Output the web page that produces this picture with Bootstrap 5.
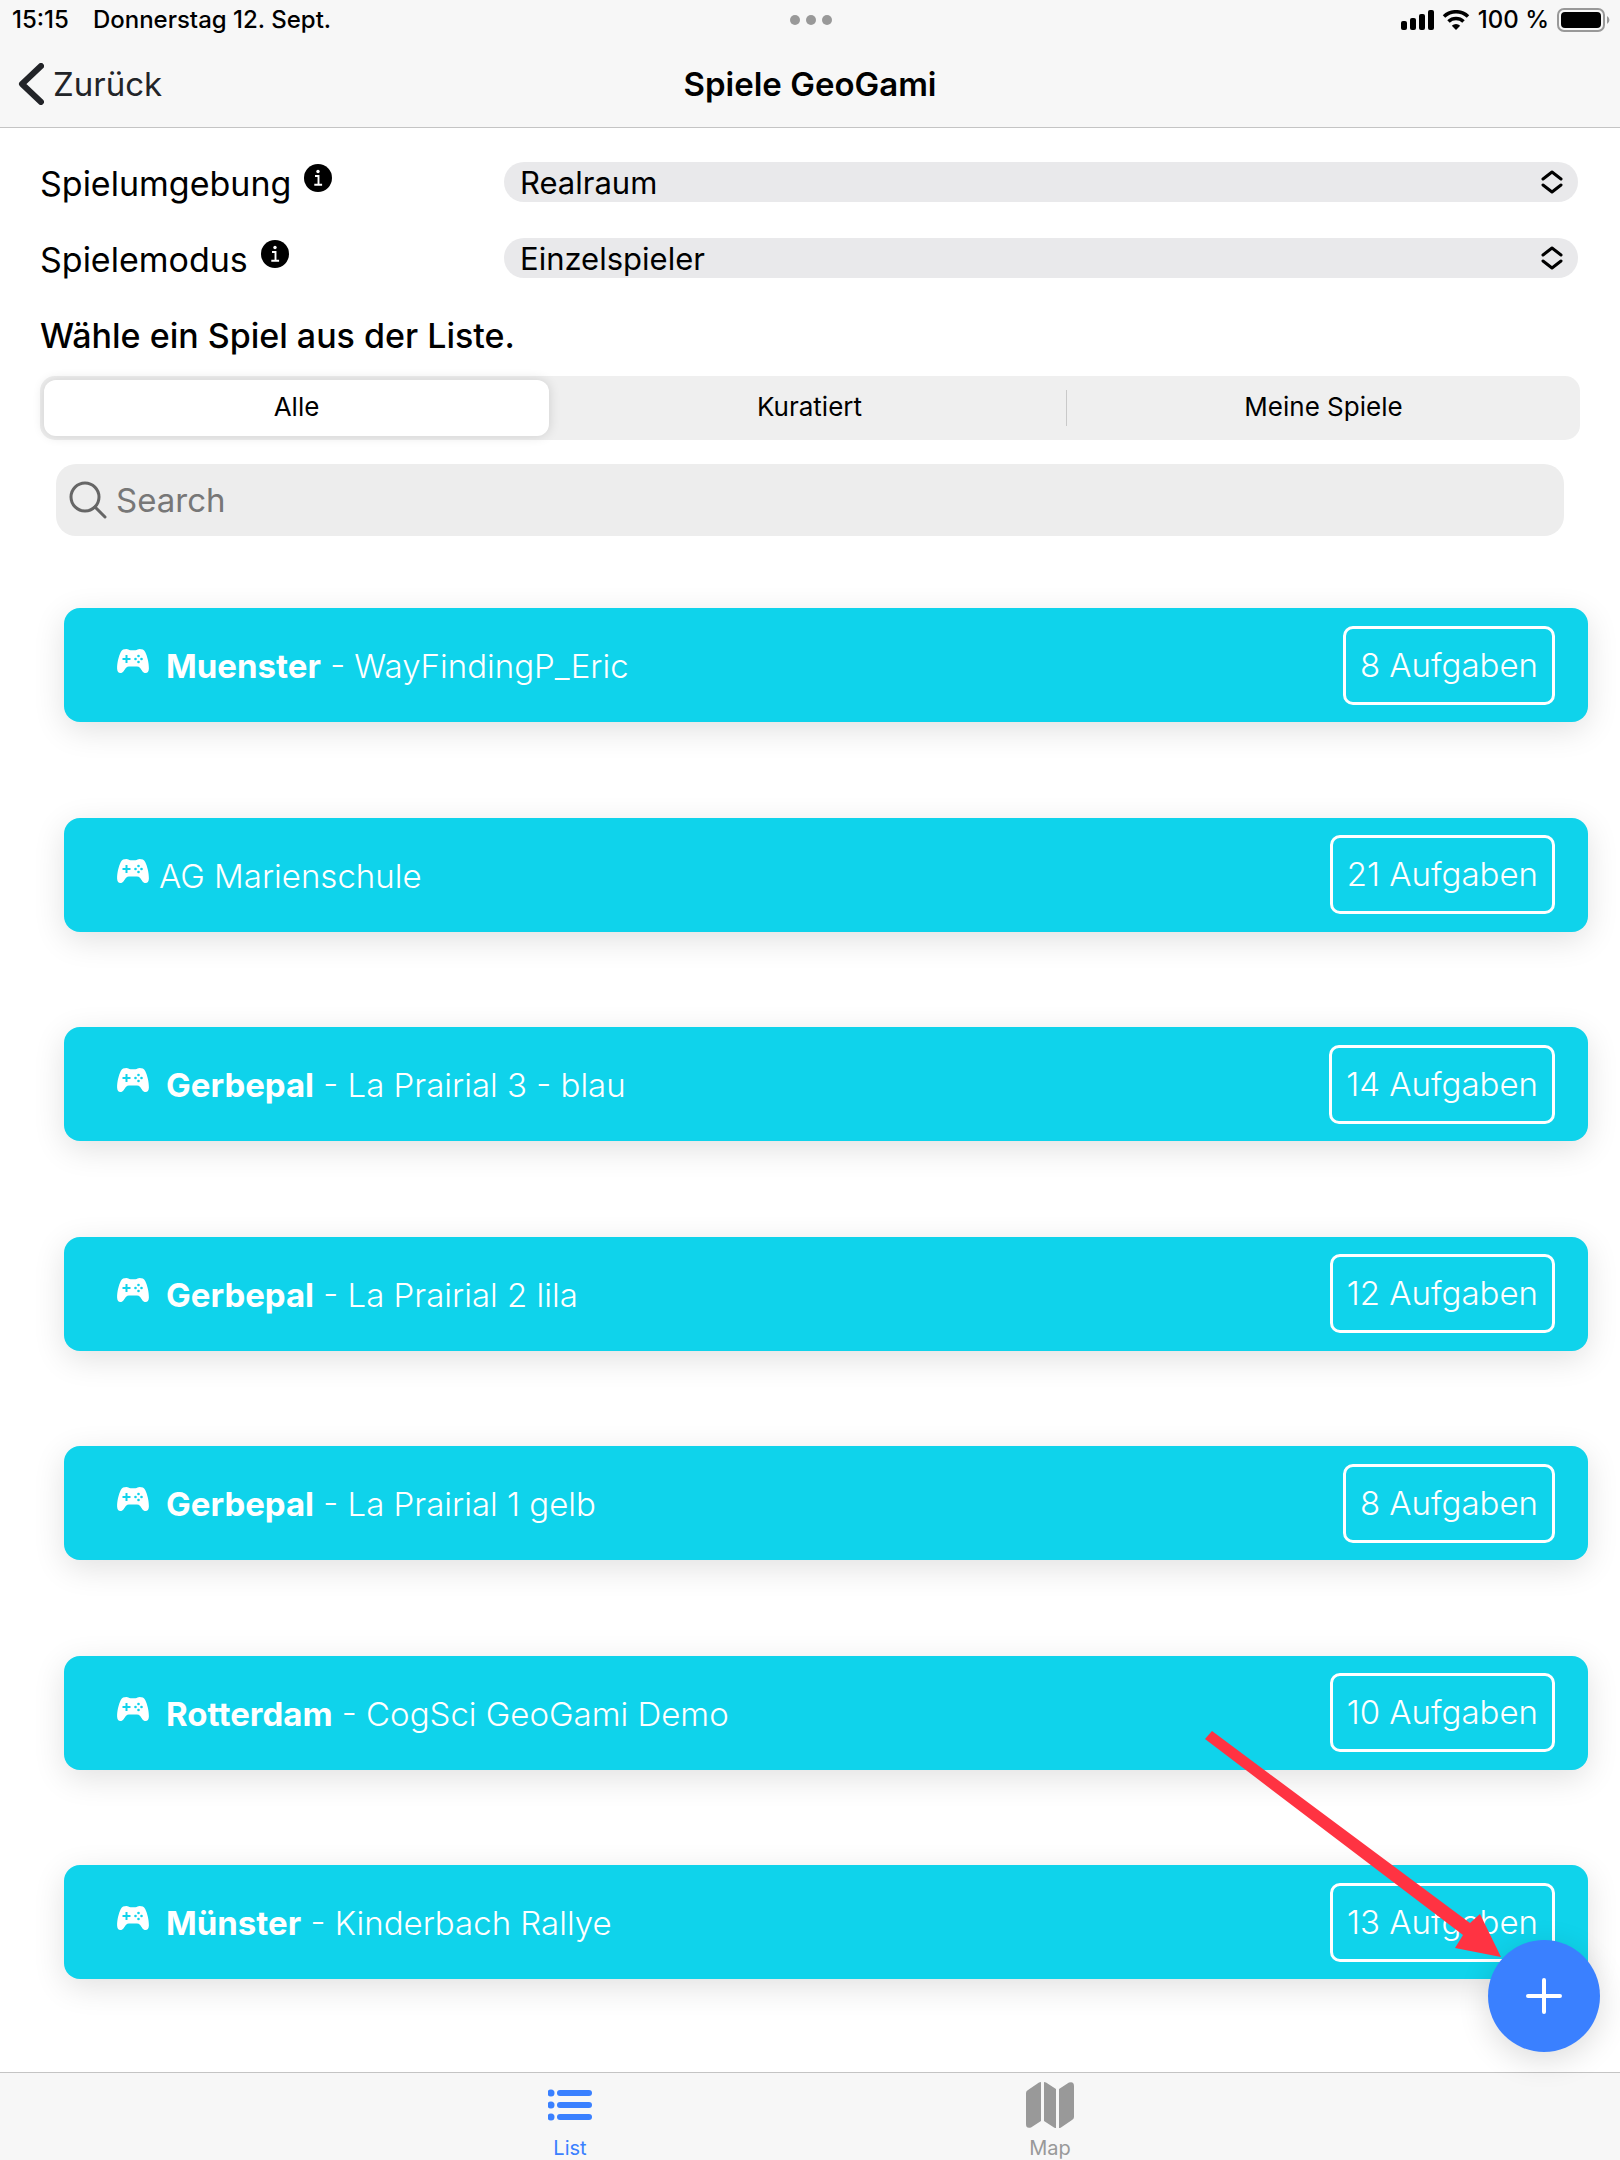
<!DOCTYPE html>
<html lang="de">
<head>
<meta charset="utf-8">
<meta name="viewport" content="width=device-width, initial-scale=1">
<title>Spiele GeoGami</title>
<link href="https://cdn.jsdelivr.net/npm/bootstrap@5.3.0/dist/css/bootstrap.min.css" rel="stylesheet">
<style>
  body { font-family: Inter, "Liberation Sans", sans-serif; font-size: 34px; line-height: 44px; color: #000; background: #fff; }
  svg { display: block; flex: none; }
  .bar-bg { background: #f7f7f7; }
  .app-header { border-bottom: 1px solid #c4c4c4; }
  .status-bar { height: 40px; padding: 0 10px 0 12px; font-size: 24px; line-height: 40px; font-weight: 500; }
  .equal-side { flex: 1 1 0; }
  .title-bar { height: 87px; padding: 0 18px; font-size: 33px; }
  .title-bar h1 { font-size: 33px; line-height: 44px; font-weight: 600; }
  .back-link { color: #222428; gap: 9px; }
  .form-area { padding: 16px 40px 0; }
  .option-row { min-height: 76px; }
  .label-col { width: 464px; gap: 13px; }
  .info-btn { margin-bottom: 12px; }
  .option-row .form-select {
    --bs-form-select-bg-img: url("data:image/svg+xml,%3csvg xmlns='http://www.w3.org/2000/svg' viewBox='0 0 22 24'%3e%3cpath d='M2 9l9-7 9 7M2 15l9 7 9-7' fill='none' stroke='%23000' stroke-width='3' stroke-linecap='round' stroke-linejoin='round'/%3e%3c/svg%3e");
    height: 40px; padding: 1px 48px 0 16px; font-size: 31px; line-height: 40px; color: #000;
    background-color: #e9e9eb; background-size: 22px 24px; background-position: right 15px center;
    border: 0; border-radius: 20px; margin-right: 2px;
  }
  .list-heading { font-size: 34px; font-weight: 500; line-height: 80px; }
  .segment { background: #efefef; border-radius: 15px; height: 64px; }
  .segment .btn { height: 56px; padding: 0; line-height: 54px; font-size: 26px; font-weight: 400; color: #000; border: 0; border-radius: 12px !important; flex: 1 1 0; margin: 0 4px !important; }
  .segment .btn-check:checked + .btn { background: #fff; color: #000; box-shadow: 0 0 12px rgba(0,0,0,.14); }
  .segment .segment-rule { width: 1px; height: 36px; background: #c9c9c9; }
  .search-wrap { margin: 24px 16px 0; height: 72px; border-radius: 20px; background: #ededed; padding-left: 13px; gap: 9px; color: #666; }
  .search-wrap .form-control { background: transparent; border: 0; padding: 0; font-size: 33px; line-height: 44px; color: #000; }
  .search-wrap .form-control::placeholder { color: #777; opacity: 1; }
  .search-wrap input::-webkit-search-cancel-button { display: none; }
  .game-list { padding: 72px 32px 93px 64px; row-gap: 64px; }
  .game-item { min-height: 114px; padding: 16px 33px 16px 53px; gap: 10px; background: #0fd3eb; color: #fff; border-radius: 16px; font-size: 33px; font-weight: 350; box-shadow: 0 8px 32px rgba(0,0,0,.12); }
  .game-item:hover { color: #fff; }
  .game-item svg { margin-bottom: 8px; }
  .game-name { padding-top: 2px; }
  .game-name strong { font-weight: 700; padding-left: 7px; }
  .task-count { border: 3px solid #fff; border-radius: 10px; padding: 0 14px; line-height: 73px; }
  .tab-footer { border-top: 1px solid #c4c4c4; height: 88px; }
  .tab-item { flex: 0 1 480px; font-size: 20px; line-height: 24px; color: #999; padding-top: 8px; }
  .tab-item.active { color: #3a80ff; }
  .tab-item .tab-icon { height: 48px; margin-bottom: 7px; }
  .float-layer { right: 20px; bottom: 108px; z-index: 3; }
  .fab { width: 112px; height: 112px; background: #3a80ff; box-shadow: 0 8px 32px rgba(0,0,0,.14); }
  .hint-arrow { right: 95px; bottom: 92px; pointer-events: none; }
</style>
</head>
<body>
<svg class="d-none" aria-hidden="true">
  <symbol id="pad" viewBox="0 0 32 24">
    <path fill="currentColor" fill-rule="evenodd" d="M9.500 0C11 0 11.800 1.200 13.500 1.200h5C20.200 1.200 21 0 22.500 0c2.600 0 4.500.6 5.700 3C30.300 7.300 32 14 31.900 19.500 31.800 22.500 30.500 24 28.600 24c-2.800 0-3.900-3.300-5.700-5.300-.8-.8-1.700-1.200-2.900-1.200h-8c-1.200 0-2.100.4-2.900 1.200C7.300 20.700 6.200 24 3.400 24 1.500 24 .2 22.500.1 19.500 0 14 1.700 7.300 3.800 3 5 .6 6.900 0 9.500 0ZM8.500 6v3h-3v2h3v3h2v-3h3V9h-3V6Z"/>
    <g fill="#0fd3eb"><circle cx="21.500" cy="7" r="1.300"/><circle cx="21.500" cy="13" r="1.300"/><circle cx="18.500" cy="10" r="1.300"/><circle cx="24.500" cy="10" r="1.300"/></g>
  </symbol>
  <symbol id="info" viewBox="0 0 28 28">
    <circle cx="14" cy="14" r="14"/>
    <circle cx="14" cy="7.500" r="1.700" fill="#fff"/>
    <path d="M11 12h3.500v8.500M10.300 20.700h7.800" fill="none" stroke="#fff" stroke-width="1.900"/>
  </symbol>
</svg>
<div class="d-flex flex-column min-vh-100 position-relative">
  <header class="app-header bar-bg">
    <div class="status-bar d-flex align-items-center">
      <div class="equal-side d-flex gap-4"><span>15:15</span><span>Donnerstag 12. Sept.</span></div>
      <svg width="42" height="10" viewBox="0 0 42 10" fill="#999" aria-hidden="true"><circle cx="5" cy="5" r="5"/><circle cx="21" cy="5" r="5"/><circle cx="37" cy="5" r="5"/></svg>
      <div class="equal-side d-flex align-items-center justify-content-end gap-2">
        <svg width="33" height="20" viewBox="0 0 33 20" aria-hidden="true"><rect y="11" width="6" height="9" rx="2"/><rect x="9" y="8" width="6" height="12" rx="2"/><rect x="18" y="4" width="6" height="16" rx="2"/><rect x="27" width="6" height="20" rx="2"/></svg>
        <svg width="28" height="20" viewBox="0 0 28 20" aria-hidden="true"><path d="M2 6.500a17.500 17.500 0 0 1 24 0M6.500 11.500a11 11 0 0 1 15 0" fill="none" stroke="#000" stroke-width="3.600"/><path d="M14 20l-4.200-4.300a6.300 6.300 0 0 1 8.400 0z"/></svg>
        <span>100 %</span>
        <svg width="53" height="24" viewBox="0 0 53 24" aria-hidden="true"><rect x="1" y="1" width="46" height="22" rx="6" fill="none" stroke="#999" stroke-width="2"/><rect x="4" y="4" width="40" height="16" rx="4"/><path d="M50 8a4.500 4.500 0 0 1 0 8z" fill="#999"/></svg>
      </div>
    </div>
    <nav class="title-bar d-flex align-items-center" aria-label="Navigation">
      <div class="equal-side d-flex">
        <a href="#" class="back-link d-flex align-items-center text-decoration-none">
          <svg width="26" height="42" viewBox="0 0 26 42" aria-hidden="true"><path d="M23 3L4 21l19 18" fill="none" stroke="currentColor" stroke-width="6" stroke-linecap="round" stroke-linejoin="round"/></svg>
          <span>Zurück</span>
        </a>
      </div>
      <h1 class="m-0">Spiele GeoGami</h1>
      <div class="equal-side"></div>
    </nav>
  </header>

  <main class="flex-grow-1 d-flex flex-column">
    <div class="form-area">
      <div class="option-row d-flex align-items-center">
        <div class="label-col d-flex align-items-center pt-1">
          <label for="env">Spielumgebung</label>
          <button type="button" class="info-btn btn p-0 border-0" aria-label="Info Spielumgebung"><svg width="28" height="28"><use href="#info"/></svg></button>
        </div>
        <select id="env" class="form-select w-auto flex-grow-1"><option>Realraum</option></select>
      </div>
      <div class="option-row d-flex align-items-center">
        <div class="label-col d-flex align-items-center pt-1">
          <label for="mode">Spielemodus</label>
          <button type="button" class="info-btn btn p-0 border-0" aria-label="Info Spielemodus"><svg width="28" height="28"><use href="#info"/></svg></button>
        </div>
        <select id="mode" class="form-select w-auto flex-grow-1"><option>Einzelspieler</option></select>
      </div>
      <h2 class="list-heading m-0">Wähle ein Spiel aus der Liste.</h2>
      <div class="segment btn-group d-flex align-items-center" role="group" aria-label="Filter">
        <input type="radio" class="btn-check" name="filter" id="f1" checked><label class="btn" for="f1">Alle</label>
        <input type="radio" class="btn-check" name="filter" id="f2"><label class="btn" for="f2">Kuratiert</label>
        <span class="segment-rule"></span>
        <input type="radio" class="btn-check" name="filter" id="f3"><label class="btn" for="f3">Meine Spiele</label>
      </div>
      <div class="search-wrap d-flex align-items-center">
        <svg width="38" height="38" viewBox="0 0 38 38" fill="none" stroke="currentColor" stroke-width="3" aria-hidden="true"><circle cx="16" cy="16" r="14"/><path d="M26 26l10 10" stroke-linecap="round"/></svg>
        <input type="search" class="form-control shadow-none" placeholder="Search" aria-label="Search">
      </div>
    </div>

    <div class="game-list flex-grow-1 d-flex flex-column justify-content-between">
      <a href="#" class="game-item d-flex align-items-center text-decoration-none"><svg width="32" height="24"><use href="#pad"/></svg><span class="game-name flex-grow-1"><strong>Muenster</strong> - WayFindingP_Eric</span><span class="task-count">8 Aufgaben</span></a>
      <a href="#" class="game-item d-flex align-items-center text-decoration-none"><svg width="32" height="24"><use href="#pad"/></svg><span class="game-name flex-grow-1">AG Marienschule</span><span class="task-count">21 Aufgaben</span></a>
      <a href="#" class="game-item d-flex align-items-center text-decoration-none"><svg width="32" height="24"><use href="#pad"/></svg><span class="game-name flex-grow-1"><strong>Gerbepal</strong> - La Prairial 3 - blau</span><span class="task-count">14 Aufgaben</span></a>
      <a href="#" class="game-item d-flex align-items-center text-decoration-none"><svg width="32" height="24"><use href="#pad"/></svg><span class="game-name flex-grow-1"><strong>Gerbepal</strong> - La Prairial 2 lila</span><span class="task-count">12 Aufgaben</span></a>
      <a href="#" class="game-item d-flex align-items-center text-decoration-none"><svg width="32" height="24"><use href="#pad"/></svg><span class="game-name flex-grow-1"><strong>Gerbepal</strong> - La Prairial 1 gelb</span><span class="task-count">8 Aufgaben</span></a>
      <a href="#" class="game-item d-flex align-items-center text-decoration-none"><svg width="32" height="24"><use href="#pad"/></svg><span class="game-name flex-grow-1"><strong>Rotterdam</strong> - CogSci GeoGami Demo</span><span class="task-count">10 Aufgaben</span></a>
      <a href="#" class="game-item d-flex align-items-center text-decoration-none"><svg width="32" height="24"><use href="#pad"/></svg><span class="game-name flex-grow-1"><strong>Münster</strong> - Kinderbach Rallye</span><span class="task-count">13 Aufgaben</span></a>
    </div>
  </main>

  <footer class="tab-footer bar-bg d-flex justify-content-center">
    <a href="#" class="tab-item active d-flex flex-column align-items-center text-decoration-none">
      <span class="tab-icon d-flex align-items-center"><svg width="44" height="32" viewBox="0 0 44 32" fill="currentColor" aria-hidden="true"><circle cx="3" cy="4" r="3.500"/><circle cx="3" cy="16" r="3.500"/><circle cx="3" cy="28" r="3.500"/><rect x="9" y="1" width="35" height="6" rx="3"/><rect x="9" y="13" width="35" height="6" rx="3"/><rect x="9" y="25" width="35" height="6" rx="3"/></svg></span>
      <span>List</span>
    </a>
    <a href="#" class="tab-item d-flex flex-column align-items-center text-decoration-none">
      <span class="tab-icon d-flex align-items-center"><svg width="48" height="46" viewBox="0 0 48 46" fill="currentColor" aria-hidden="true"><path d="M15 0v39L5 45.500Q0 47 0 42V11Q0 9 2 8L13 .6Q14 0 15 0ZM18 0q1 0 2 .6L30 7v39q-1 0-2-.6L18 39ZM33 7L43 .5Q48-1 48 4v31q0 2-2 3l-11 7.400Q34 46 33 46Z"/></svg></span>
      <span>Map</span>
    </a>
  </footer>

  <div class="float-layer position-absolute">
    <button type="button" class="fab btn rounded-circle border-0 p-0 d-flex align-items-center justify-content-center" aria-label="Neues Spiel">
      <svg width="36" height="36" viewBox="0 0 36 36" fill="none" stroke="#fff" stroke-width="4" stroke-linecap="round"><path d="M18 2v32M2 18h32"/></svg>
    </button>
    <svg class="hint-arrow position-absolute" width="300" height="232" viewBox="0 0 300 232" fill="#ff3342" aria-hidden="true"><path d="M7 3L265 195 275 186 296 229 250 220 258 207 0 11Z"/></svg>
  </div>
</div>
<script src="https://cdn.jsdelivr.net/npm/bootstrap@5.3.0/dist/js/bootstrap.bundle.min.js"></script>
</body>
</html>
